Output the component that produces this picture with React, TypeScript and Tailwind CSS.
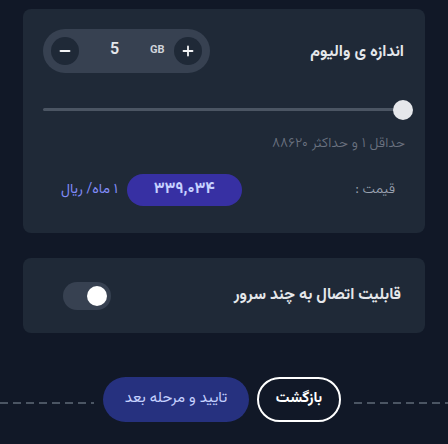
import React from "react";

const font = { fontFamily: 'Vazirmatn, "Noto Sans Arabic", "DejaVu Sans", sans-serif' };

function Stepper() {
  return (
    <div dir="ltr" className="flex h-11 w-[167px] items-center rounded-full bg-[#374151] px-2">
      <button className="flex h-7 w-7 items-center justify-center rounded-full bg-[#1f2937]">
        <svg width="12" height="12" viewBox="0 0 12 12">
          <path d="M1.5 6h9" stroke="#f3f4f6" strokeWidth="1.8" strokeLinecap="round" />
        </svg>
      </button>
      <span className="ml-[31px] w-[10px] text-[16px] font-semibold text-gray-200">5</span>
      <span className="ml-[30px] text-[11px] font-bold text-gray-300">GB</span>
      <button className="ml-auto flex h-7 w-7 items-center justify-center rounded-full bg-[#1f2937]">
        <svg width="12" height="12" viewBox="0 0 12 12">
          <path d="M1.5 6h9M6 1.5v9" stroke="#f3f4f6" strokeWidth="1.8" strokeLinecap="round" />
        </svg>
      </button>
    </div>
  );
}

function Slider() {
  return (
    <div dir="ltr" className="relative mt-[26px] flex h-5 items-center">
      <div className="h-[3px] w-full rounded-full bg-[#4b5563]" />
      <div className="absolute right-[-8px] top-[1px] h-5 w-5 rounded-full bg-[#e5e7eb]" />
    </div>
  );
}

export default function App() {
  return (
    <div dir="rtl" style={font} className="min-h-[444px] w-[448px] bg-[#111827] pt-[9px]">
      <div className="mx-[23px] flex h-[224px] flex-col rounded-lg bg-[#1f2937] px-5 pt-5">
        <div className="flex items-center justify-between">
          <h2 className="mr-[1px] mt-[3px] text-[16px] font-bold text-gray-200">اندازه ی والیوم</h2>
          <Stepper />
        </div>
        <Slider />
        <p className="mt-[15px] text-[14px] font-light text-[#6b7280]">حداقل ۱ و حداکثر ۸۸۶۲۰</p>
        <div className="mt-[19px] flex items-center justify-between pl-[18px] pr-[10px]">
          <span className="text-[14px] font-light text-gray-400">قیمت :</span>
          <div dir="ltr" className="flex items-center gap-[9px]">
            <span dir="rtl" className="text-[14px] text-[#818cf8]">۱ ماه/ ریال</span>
            <div className="flex h-8 w-[115px] items-center justify-center rounded-full bg-[#3730a3] text-[16px] font-bold text-indigo-200">
              ۳۳۹,۰۳۴
            </div>
          </div>
        </div>
      </div>

      <div className="mx-[23px] mt-[25px] flex h-[75px] items-center justify-between rounded-lg bg-[#1f2937] pl-[40px] pr-[24px]">
        <span className="text-[16px] font-bold text-gray-200">قابلیت اتصال به چند سرور</span>
        <div dir="ltr" className="flex h-7 w-12 items-center justify-end rounded-full bg-[#374151] pr-1">
          <div className="h-5 w-5 rounded-full bg-white" />
        </div>
      </div>

      <div dir="ltr" className="mt-[44px] flex items-center">
        <div className="mt-[6px] h-[2px] flex-1 bg-[repeating-linear-gradient(to_right,#4b5563_0_8px,transparent_8px_13px)]" />
        <button className="ml-[9px] flex h-[45px] w-[146px] items-center justify-center rounded-full bg-[#26317f] text-[15px] text-indigo-200">
          <span dir="rtl">تایید و مرحله بعد</span>
        </button>
        <button className="ml-2 flex h-[45px] w-[84px] items-center justify-center rounded-full border-2 border-white text-[15px] font-bold text-white">
          <span dir="rtl">بازگشت</span>
        </button>
        <div className="ml-[13px] mt-[6px] h-[2px] flex-1 bg-[repeating-linear-gradient(to_right,#4b5563_0_8px,transparent_8px_13px)]" />
      </div>
    </div>
  );
}
